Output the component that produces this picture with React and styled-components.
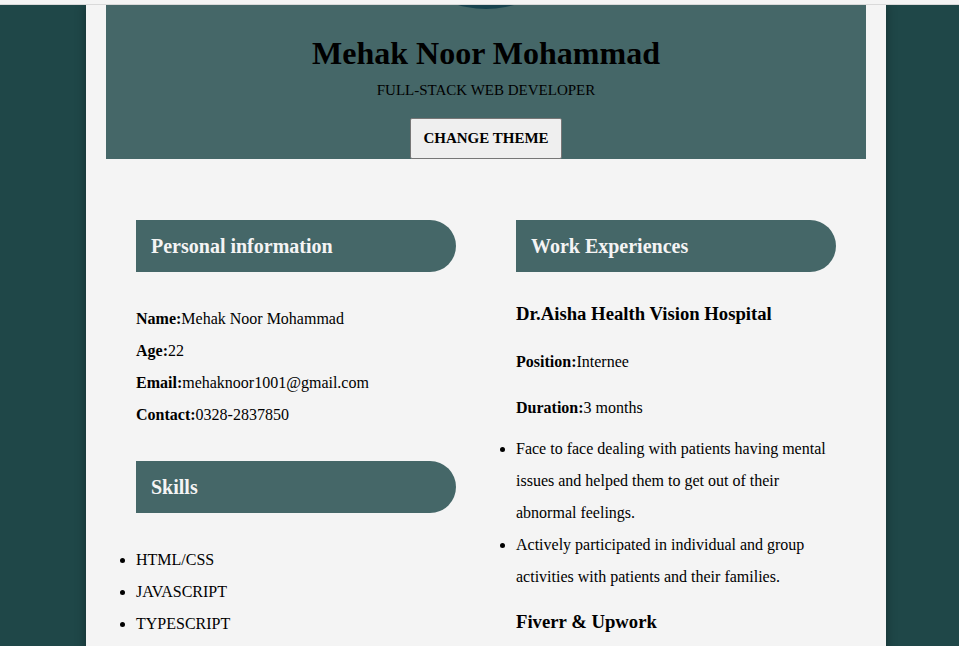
import React from "react";
import styled, { createGlobalStyle } from "styled-components";

const Global = createGlobalStyle`
  html, body {
    margin: 0;
    padding: 0;
    background: #1f4748;
    font-family: "Liberation Serif", "Times New Roman", serif;
    color: #000;
  }
`;

const TopStrip = styled.div`
  height: 4px;
  background: #f4f4f4;
  border-bottom: 1px solid #d9d9d9;
  position: relative;
  z-index: 2;
`;

const Sheet = styled.main`
  width: 800px;
  margin-left: 86px;
  background: #f4f4f4;
  box-shadow: 0 0 10px rgba(0, 0, 0, 0.35);
  padding: 0 20px 40px;
  box-sizing: border-box;
  min-height: 700px;
`;

const Header = styled.header`
  background: #456768;
  overflow: hidden;
  display: flex;
  flex-direction: column;
  align-items: center;
`;

const Avatar = styled.div`
  width: 200px;
  height: 200px;
  border-radius: 50%;
  background: #17434f;
  margin-top: -196px;
`;

const Name = styled.h1`
  font-size: 32px;
  font-weight: bold;
  margin: 26px 0 0;
  line-height: 37px;
`;

const Role = styled.p`
  font-size: 15px;
  margin: 10px 0 0;
  line-height: 17px;
`;

const ThemeButton = styled.button`
  margin-top: 19px;
  font-family: inherit;
  font-weight: bold;
  font-size: 15px;
  padding: 11px 12px;
  line-height: 17px;
  background: #efefef;
  border: 1px solid #767676;
  border-radius: 2px;
  color: #000;
  cursor: pointer;
`;

const Columns = styled.div`
  display: grid;
  grid-template-columns: 320px 320px;
  column-gap: 60px;
  padding: 61px 30px 0;
`;

const Column = styled.section`
  display: block;
`;

const Heading = styled.h2`
  margin: ${({ $first }) => ($first ? "0" : "30px")} 0 31px;
  height: 52px;
  display: flex;
  align-items: center;
  padding-left: 15px;
  background: #456768;
  color: #f4f4f4;
  font-size: 20px;
  font-weight: bold;
  border-radius: 0 26px 26px 0;
`;

const InfoLine = styled.p`
  margin: 0;
  font-size: 16px;
  line-height: 32px;
`;

const List = styled.ul`
  margin: 0;
  padding: 0;
  font-size: 16px;
  line-height: 32px;
`;

const Job = styled.h3`
  margin: 0 0 22px;
  font-size: 18.7px;
  line-height: 22px;
`;

const JobDetail = styled.p`
  margin: 16px 0 10px;
  font-size: 16px;
  line-height: 30px;
`;

const NextJob = styled(Job)`
  margin-top: 18px;
`;

const Field = ({ label, children, as: Comp = InfoLine }) => (
  <Comp>
    <b>{label}:</b>
    {children}
  </Comp>
);

export default function App() {
  return (
    <>
      <Global />
      <TopStrip />
      <Sheet>
        <Header>
          <Avatar />
          <Name>Mehak Noor Mohammad</Name>
          <Role>FULL-STACK WEB DEVELOPER</Role>
          <ThemeButton>CHANGE THEME</ThemeButton>
        </Header>
        <Columns>
          <Column>
            <Heading $first>Personal information</Heading>
            <Field label="Name">Mehak Noor Mohammad</Field>
            <Field label="Age">22</Field>
            <Field label="Email">mehaknoor1001@gmail.com</Field>
            <Field label="Contact">0328-2837850</Field>
            <Heading>Skills</Heading>
            <List>
              <li>HTML/CSS</li>
              <li>JAVASCRIPT</li>
              <li>TYPESCRIPT</li>
              <li>REACT</li>
            </List>
          </Column>
          <Column>
            <Heading $first>Work Experiences</Heading>
            <Job>Dr.Aisha Health Vision Hospital</Job>
            <Field as={JobDetail} label="Position">Internee</Field>
            <Field as={JobDetail} label="Duration">3 months</Field>
            <List>
              <li>
                Face to face dealing with patients having mental issues and
                helped them to get out of their abnormal feelings.
              </li>
              <li>
                Actively participated in individual and group activities with
                patients and their families.
              </li>
            </List>
            <NextJob>Fiverr &amp; Upwork</NextJob>
            <Field as={JobDetail} label="Position">Freelancer</Field>
          </Column>
        </Columns>
      </Sheet>
    </>
  );
}
